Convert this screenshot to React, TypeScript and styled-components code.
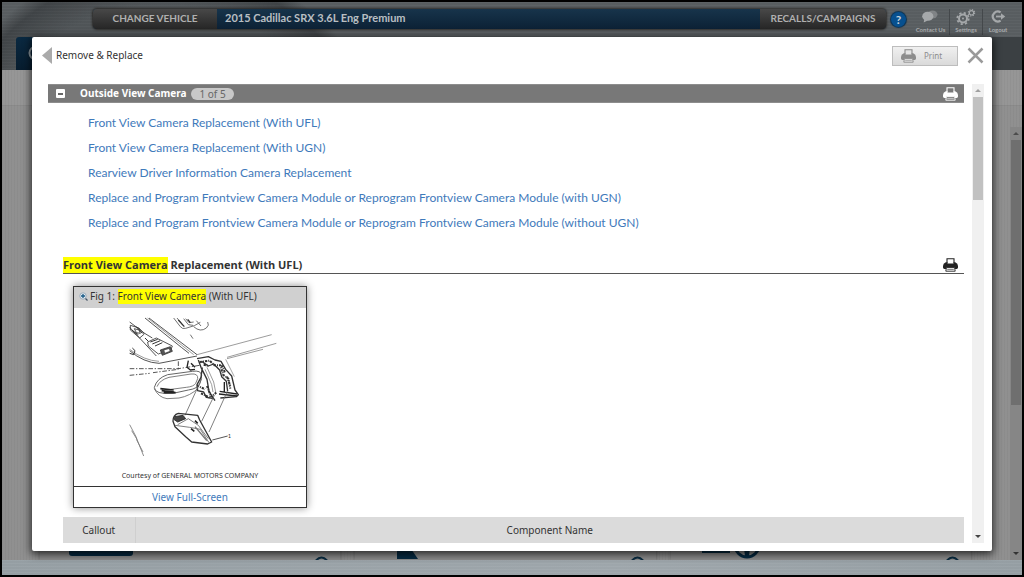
import React from "react";
import styled, { createGlobalStyle } from "styled-components";

const GlobalStyle = createGlobalStyle`
  *, *::before, *::after { box-sizing: border-box; }
  body { margin: 0; background: #000; font-family: Lato, "Noto Sans", sans-serif; color: #333; }
  button { font: inherit; color: inherit; border: 0; padding: 0; background: none; cursor: pointer; }
  svg { display: block; flex: none; }
  h1, h2, h3, ul, figure { margin: 0; padding: 0; }
`;

const brushed = `repeating-linear-gradient(180deg, rgba(255,255,255,.02) 0 1px, rgba(0,0,0,.02) 1px 3px)`;

/* ---------- page behind the dialog ---------- */

const Page = styled.div`
  position: relative;
  display: flex;
  flex-direction: column;
  min-height: 100vh;
  border: 2px solid #000;
  background: #929292;
`;

const TopArea = styled.div`
  background: ${brushed}, radial-gradient(circle 240px at 160px 190px, #515659 0 78%, #404447 92%, #5a5f62 98%);
`;

const TopBar = styled.header`
  display: flex;
  align-items: flex-start;
  height: 35px;
  padding: 7px 9px 0 91px;
`;

const VehicleBar = styled.div`
  flex: 1;
  display: flex;
  height: 20px;
  border-radius: 4px;
  overflow: hidden;
  box-shadow: 0 0 2px 1px rgba(30, 25, 22, 0.7);
  background: linear-gradient(#17344b, #0c2135);
  color: #b9bfc3;
`;

const BarButton = styled.button<{ $width: number }>`
  width: ${(p) => p.$width}px;
  background: linear-gradient(#484848, #262626);
  color: #b0b0b0;
  font-size: 10px;
  font-weight: 700;
  line-height: 18px;
  padding-bottom: 2px;
`;

const Vehicle = styled.div`
  flex: 1;
  padding-left: 8px;
  font-size: 11px;
  font-weight: 700;
  line-height: 18px;
`;

const HelpButton = styled.button`
  width: 15px;
  height: 15px;
  margin: 3px 5px 0;
  border-radius: 50%;
  background: #07508f;
  box-shadow: 0 0 1px 1px #0a3152;
  color: #c8d2da;
  font-size: 12px;
  font-weight: 700;
  line-height: 15px;
`;

const Utility = styled.button<{ $width: number; $divided?: boolean }>`
  display: flex;
  flex-direction: column;
  align-items: center;
  width: ${(p) => p.$width}px;
  height: 26px;
  border-left: 1px solid ${(p) => (p.$divided ? "#44484b" : "transparent")};
  color: #a5a8aa;
  font-size: 6px;
  font-weight: 900;
  line-height: 8px;
  white-space: nowrap;
`;

const NavStrip = styled.nav`
  display: flex;
  height: 33px;
  padding-left: 14px;
  background: linear-gradient(90deg, transparent 50%, #3b4043 50%);
`;

const NavTab = styled.div`
  width: 120px;
  padding: 8px 0 0 12px;
  border-radius: 3px 0 0 0;
  background: linear-gradient(#0a2941, #071c2e);
`;

const Body = styled.main`
  flex: 1;
  display: flex;
  background:
    repeating-linear-gradient(90deg, rgba(0,0,0,.03) 0 1px, transparent 1px 3px),
    linear-gradient(#969696 35px, #848484 35px, #909090 36px);
`;

const Tiles = styled.div`
  flex: 1;
  display: grid;
  grid-template-columns: repeat(3, 1fr);
  align-items: end;
  gap: 15px;
  padding: 0 39px 0 38px;
`;

const Tile = styled.section`
  display: flex;
  align-items: flex-end;
  justify-content: space-between;
  height: 60px;
  padding: 0 12px 0 29px;
  background: #8d8d8d;
  box-shadow: 0 0 3px #6e6e6e;
`;

const PageScroll = styled.div`
  display: flex;
  flex-direction: column;
  align-items: center;
  width: 12px;
  margin-top: 57px;
  background: #868686;
`;

const PageThumb = styled.div`
  width: 10px;
  height: 265px;
  background: #6f6f6f;
`;

const Footer = styled.footer`
  height: 15px;
  background: ${brushed}, linear-gradient(90deg, #98a1a6, #a1a9ae 60%, #98a1a6);
`;

/* ---------- dialog ---------- */

const Dialog = styled.section`
  position: absolute;
  top: 35px;
  left: 30px;
  right: 30px;
  padding-bottom: 8px;
  border-radius: 2px;
  background: #fff;
  box-shadow: 0 2px 8px 1px rgba(0, 0, 0, 0.75);
`;

const DialogHead = styled.header`
  display: flex;
  align-items: center;
  height: 47px;
  padding: 0 8px 10px 10px;
`;

const Back = styled.button`
  display: flex;
  align-items: center;
  gap: 4px;
  margin-right: auto;
  font-family: "Noto Sans", sans-serif;
  font-size: 10px;
  line-height: 17px;
`;

const PrintButton = styled.button`
  display: flex;
  align-items: center;
  gap: 8px;
  width: 66px;
  height: 20px;
  margin-right: 9px;
  padding-left: 8px;
  border: 1px solid #bdbdbd;
  background: linear-gradient(#f0f0f0, #dadada);
  color: #8c8c8c;
  font-family: "Noto Sans", sans-serif;
  font-size: 8px;
`;

const Pane = styled.div`
  display: flex;
  gap: 8px;
  padding: 0 8px 0 16px;
`;

const Content = styled.div`
  flex: 1;
  min-width: 0;
`;

const SectionBar = styled.div`
  display: flex;
  align-items: center;
  height: 19px;
  padding: 0 6px 0 8px;
  border: 1px solid #8d8d8d;
  border-width: 1px 0;
  background: #787878;
  color: #fff;
  font-family: "Noto Sans", sans-serif;
  font-size: 10px;
`;

const Collapse = styled.button`
  width: 9px;
  height: 9px;
  padding: 0 2px;
  margin-right: 15px;
  border-radius: 1px;
  background: #fff;
  &::before { content: ""; display: block; height: 2px; background: #666; }
`;

const SectionTitle = styled.h2`
  font-size: 10px;
  font-weight: 700;
  line-height: 17px;
`;

const Count = styled.span`
  margin: 0 auto 0 5px;
  padding: 0 8px;
  border-radius: 6px;
  background: #c8c8c8;
  color: #666;
  line-height: 12px;
`;

const Links = styled.ul`
  list-style: none;
  padding: 7px 0 0 40px;
  font-size: 12px;
  line-height: 25px;
`;

const Link = styled.a`
  color: #3f7abb;
  text-decoration: none;
`;

const Article = styled.article`
  padding: 21px 0 0 15px;
`;

const ArticleHead = styled.header`
  display: flex;
  align-items: center;
  justify-content: space-between;
  height: 18px;
  padding-right: 6px;
  border-bottom: 1px solid #555;
`;

const ArticleTitle = styled.h3`
  font-family: "Open Sans", sans-serif;
  font-size: 11px;
  font-weight: 700;
  line-height: 16px;
`;

const Mark = styled.mark`
  display: inline-block;
  background: #ff0;
  color: inherit;
`;

const Figure = styled.figure`
  width: 234px;
  margin: 12px 0 9px 10px;
  border: 1px solid #333;
  box-shadow: 0 0 8px rgba(0, 0, 0, 0.45);
  font-family: "Noto Sans", sans-serif;
  font-size: 10px;
  text-align: center;
`;

const FigCaption = styled.figcaption`
  display: flex;
  align-items: center;
  gap: 2px;
  height: 21px;
  padding: 0 5px 2px;
  background: #d0d0d0;
  line-height: 15px;
`;

const Drawing = styled.div`
  display: flex;
  justify-content: center;
  padding-top: 2px;
`;

const Courtesy = styled.p`
  margin: 0;
  padding: 10px 0 5px;
  font-size: 7px;
  line-height: 11px;
`;

const FullScreen = styled.div`
  border-top: 1px solid #333;
  line-height: 20px;
`;

const Table = styled.table`
  width: 100%;
  border-collapse: collapse;
  table-layout: fixed;
  background: #dbdbdb;
  font-family: "Noto Sans", sans-serif;
  font-size: 10px;
  line-height: 26px;
`;

const Th = styled.th<{ $width?: number }>`
  width: ${(p) => (p.$width ? p.$width + "px" : "auto")};
  padding: 0;
  font-weight: 400;
  & + & { border-left: 1px solid #cfcfcf; }
`;

const Scroll = styled.div`
  display: flex;
  flex-direction: column;
  align-items: center;
  width: 12px;
  background: #f0f0f0;
`;

const Thumb = styled.div`
  width: 10px;
  height: 103px;
  background: #c1c1c1;
`;

const Arrow = styled.button<{ $down?: boolean; $tone: string }>`
  width: 12px;
  height: 13px;
  margin-top: ${(p) => (p.$down ? "auto" : "0")};
  &::before {
    content: "";
    display: block;
    width: 0;
    margin: 0 auto;
    border: 3px solid transparent;
    border-top: ${(p) => (p.$down ? `3px solid ${p.$tone}` : "0")};
    border-bottom: ${(p) => (p.$down ? "0" : `3px solid ${p.$tone}`)};
  }
`;

/* ---------- drawings ---------- */

const Printer = ({ body, paper, edge }: { body: string; paper: string; edge: string }) => (
  <svg width="15" height="14" viewBox="0 0 15 14" aria-hidden="true">
    <path d="M4 5V.8h7V5" fill={paper} stroke={edge} strokeWidth="1.1" />
    <path d="M2.800 4.200h1.700v1.400h6V4.200h1.700Q15 5.500 15 8v1.600q0 1.400-1.400 1.400H1.400Q0 11 0 9.600V8Q0 5.500 2.800 4.200z" fill={body} />
    <path d="M3.400 9.600h8.200l.6 3.600H2.800z" fill={paper} stroke={edge} strokeWidth=".9" />
    <path d="M4.200 11.400h6.600" stroke={body} strokeWidth=".6" />
  </svg>
);

const Gears = () => (
  <svg width="20" height="17" viewBox="0 0 20 17" fill="none" stroke="currentColor" aria-hidden="true">
    <circle cx="7" cy="9.500" r="4" strokeWidth="2" />
    <circle cx="7" cy="9.500" r="5.700" strokeWidth="1.800" strokeDasharray="2.200 2.280" />
    <circle cx="7" cy="9.500" r="1" fill="currentColor" stroke="none" />
    <circle cx="15.500" cy="3.800" r="2.200" strokeWidth="1.200" />
    <circle cx="15.500" cy="3.800" r="3.200" strokeWidth="1.100" strokeDasharray="1.250 1.260" />
  </svg>
);

const Bubbles = () => (
  <svg width="18" height="17" viewBox="0 0 18 17" fill="currentColor" aria-hidden="true">
    <ellipse cx="10.500" cy="5.500" rx="5" ry="4" opacity=".5" />
    <ellipse cx="5.800" cy="7.300" rx="5.600" ry="4.500" />
    <path d="M2.300 10l-.6 3.600 4-2.200z" />
  </svg>
);

const Exit = () => (
  <svg width="16" height="17" viewBox="0 0 16 17" fill="none" stroke="currentColor" strokeWidth="2.200" aria-hidden="true">
    <path d="M10.600 3.300A5 5 0 1 0 10.600 11.700" />
    <path d="M6 7.500h6" strokeWidth="1.800" />
    <path d="M11 4.300L15.200 7.500 11 10.700z" fill="currentColor" stroke="none" />
  </svg>
);

const Badge = () => (
  <svg width="13" height="4" viewBox="0 0 13 4" fill="none" aria-hidden="true">
    <path d="M1 4.500Q6.500-1.500 12 4.500" stroke="#0a2c42" strokeWidth="2" />
  </svg>
);

const Camera = () => (
  <svg width="190" height="150" viewBox="-74 0 570 450" fill="none" stroke="#333" strokeWidth="2.500" strokeLinejoin="round" role="img" aria-label="Front view camera assembly">
    {/* roof console */}
    <path d="M30 52L110 138M30 36L75 70 98 84M88 24L232 134M76 24L185 112M30 122Q72 158 118 160L232 138M185 112L208 130" />
    <path d="M84 24L222 134M30 118Q74 152 118 154" stroke="#888" />
    <path d="M32 46l26 8 16 18-14 12-28-24zM44 56l14 4 4 10-12-2zM84 96l26-12 48 24-4 10-38 14-30-24z" />
    <path d="M122 120l30-10 6 14-30 12z" fill="#555" />
    <path d="M134 121l14-4 2 6-14 5z" fill="#fff" stroke="none" />
    <path d="M92 96l22-8M98 102l24-10M106 108l22-10M76 84l10 10M30 130l12 4 4-12-8-8M36 60l20 14M50 50l18 20" strokeWidth="3" />
    {/* visor mount */}
    <path d="M162 24l20 26q6 8 16 5l26-8 18-10M172 24l18 22M192 26l14 18 14 2M198 26l10 12 14-2M222 50q20 18 38 4 10-8 4-18M230 32l14 16M212 74l8 12" stroke="#555" />
    <path d="M176 30l18 20M204 28l8 10" stroke="#333" strokeWidth="4" />
    {/* headliner edges */}
    <path d="M232 134L456 74M322 142L470 100M322 146L430 118" stroke="#888" />
    <path d="M30 176H176L240 166M30 196l60-6M100 188l76-10M176 154v26" strokeDasharray="14 5 4 5" />
    <path d="M318 148l26 52" stroke="#999" />
    {/* mirror */}
    <path d="M104 232Q112 204 144 194L218 184Q244 180 246 196L242 218Q236 236 206 240L160 250Q104 254 104 232z" strokeWidth="3" stroke="#666" />
    <path d="M112 230Q120 210 148 202L214 192Q236 190 234 206L228 220Q222 230 200 232L154 238M104 236q12 26 38 30l36-2q34-6 58-30" stroke="#666" />
    <path d="M122 236l40 4M126 242l38 4M132 248l36 0" stroke="#222" strokeWidth="5" />
    <path d="M206 152l-4 20 10 8 14-2M214 160l12 12" stroke="#222" strokeWidth="4" />
    {/* bracket */}
    <path d="M232 146l34-6 20 10 18 4 14 24 18 20 10 42 10 14-6 6-48 4M236 150l8 22 18 36 6 36 18 28M246 154l20 14 16-6 18 18 6 20 14 14 4 30M248 172l-4 30-12 22 2 18 18 4 8 16 22 4" stroke="#333" strokeWidth="4" />
    <path d="M240 156l30-4 14 14 18 0 8 28 16 12 6 30M252 164l16 4M306 166l10 22M322 200l10 28M232 226l24 12M244 250l28 14M262 228l12 32 16-12" stroke="#333" strokeWidth="6" strokeDasharray="7 3 3 3" />
    <path d="M300 244l52 8M298 252l54 6M314 216v30" stroke="#222" strokeWidth="4" />
    <path d="M262 172l20 44 6 30M256 178l20 46 4 22" stroke="#888" />
    {/* explode lines */}
    <path d="M246 206L196 316M284 256L246 334M322 246L268 366" stroke="#666" />
    {/* camera module */}
    <path d="M160 334Q160 314 176 310L234 316 240 330 276 396 264 402 216 396 198 380 166 350z" stroke="#333" strokeWidth="4" />
    <path d="M164 320l26-4 8 10-24 10-12-8" fill="#444" stroke="#222" />
    <path d="M174 344L206 326 236 346 266 386M210 352L242 358 268 398M166 346L210 352" stroke="#666" />
    <path d="M226 332l8 8M214 356l10 8" stroke="#222" strokeWidth="5" />
    <path d="M236 362l26 30M226 350l34 40" stroke="#777" strokeWidth="4" />
    <path d="M278 390L324 378" />
    {/* windscreen edge */}
    <path d="M30 344L48 378 72 438M36 362l16 26M50 388l20 38" stroke="#777" />
    <text x="325" y="384" fill="#222" stroke="none" fontSize="15" fontFamily="Lato, sans-serif">1</text>
  </svg>
);

const topics = [
  "Front View Camera Replacement (With UFL)",
  "Front View Camera Replacement (With UGN)",
  "Rearview Driver Information Camera Replacement",
  "Replace and Program Frontview Camera Module or Reprogram Frontview Camera Module (with UGN)",
  "Replace and Program Frontview Camera Module or Reprogram Frontview Camera Module (without UGN)",
];

export default function App() {
  return (
    <Page>
      <GlobalStyle />
      <TopArea>
        <TopBar>
          <VehicleBar>
            <BarButton $width={124}>CHANGE VEHICLE</BarButton>
            <Vehicle>2015 Cadillac SRX 3.6L Eng Premium</Vehicle>
            <BarButton $width={126}>RECALLS/CAMPAIGNS</BarButton>
          </VehicleBar>
          <HelpButton aria-label="Help">?</HelpButton>
          <Utility $width={38}><Bubbles />Contact Us</Utility>
          <Utility $width={33} $divided><Gears />Settings</Utility>
          <Utility $width={31} $divided><Exit />Logout</Utility>
        </TopBar>
        <NavStrip>
          <NavTab>
            <svg width="16" height="16" viewBox="0 0 16 16" fill="none" stroke="#8d989f" strokeWidth="2" aria-hidden="true">
              <circle cx="8" cy="8" r="6.500" />
            </svg>
          </NavTab>
        </NavStrip>
      </TopArea>
      <Body>
        <Tiles>
          <Tile>
            <svg width="64" height="20" viewBox="0 0 64 20" aria-hidden="true">
              <rect width="64" height="16" rx="3" fill="#062a42" />
            </svg>
            <Badge />
          </Tile>
          <Tile>
            <svg width="34" height="20" viewBox="0 0 34 20" aria-hidden="true">
              <path d="M13 0h8l13 19H13z" fill="#062a42" />
            </svg>
            <Badge />
          </Tile>
          <Tile>
            <svg width="62" height="30" viewBox="0 0 62 30" aria-hidden="true">
              <path d="M2 22h28" stroke="#062a42" strokeWidth="2" />
              <circle cx="47" cy="15" r="12" fill="none" stroke="#062a42" strokeWidth="3" />
              <path d="M44 18h6l-1 8h-4z" fill="#062a42" />
            </svg>
            <Badge />
          </Tile>
        </Tiles>
        <PageScroll>
          <Arrow $tone="#4c4c4c" aria-label="Scroll page up" />
          <PageThumb />
          <Arrow $down $tone="#333" aria-label="Scroll page down" />
        </PageScroll>
      </Body>
      <Footer />

      <Dialog role="dialog" aria-label="Remove & Replace">
        <DialogHead>
          <Back>
            <svg width="10" height="17" viewBox="0 0 10 17" aria-hidden="true">
              <path d="M10 0v17L0 8.500z" fill="#aaa" />
            </svg>
            Remove &amp; Replace
          </Back>
          <PrintButton>
            <Printer body="#8c8c8c" paper="#e4e4e4" edge="#8c8c8c" />
            Print
          </PrintButton>
          <button aria-label="Close">
            <svg width="17" height="17" viewBox="0 0 17 17" aria-hidden="true">
              <path d="M1.500 1.500l14 14M15.500 1.500l-14 14" stroke="#9a9a9a" strokeWidth="2.500" />
            </svg>
          </button>
        </DialogHead>
        <Pane>
          <Content>
            <SectionBar>
              <Collapse aria-label="Collapse section" />
              <SectionTitle>Outside View Camera</SectionTitle>
              <Count>1 of 5</Count>
              <button aria-label="Print section"><Printer body="#fff" paper="#787878" edge="#fff" /></button>
            </SectionBar>
            <Links>
              {topics.map((t) => (
                <li key={t}><Link href="#topic">{t}</Link></li>
              ))}
            </Links>
            <Article>
              <ArticleHead>
                <ArticleTitle><Mark>Front View Camera</Mark> Replacement (With UFL)</ArticleTitle>
                <button aria-label="Print article"><Printer body="#222" paper="#fff" edge="#222" /></button>
              </ArticleHead>
              <Figure>
                <FigCaption>
                  <svg width="9" height="9" viewBox="0 0 9 9" fill="none" aria-hidden="true">
                    <circle cx="4" cy="4" r="3.200" stroke="#9ab" fill="#e8eef2" />
                    <path d="M4 2v4M2 4h4" stroke="#1a5a86" strokeWidth="1.300" />
                    <path d="M6.500 6.500l2 2" stroke="#456" strokeWidth="1.200" />
                  </svg>
                  <span>Fig 1: <Mark>Front View Camera</Mark> (With UFL)</span>
                </FigCaption>
                <Drawing><Camera /></Drawing>
                <Courtesy>Courtesy of GENERAL MOTORS COMPANY</Courtesy>
                <FullScreen><Link href="#figure">View Full-Screen</Link></FullScreen>
              </Figure>
              <Table>
                <thead>
                  <tr>
                    <Th scope="col" $width={72}>Callout</Th>
                    <Th scope="col">Component Name</Th>
                  </tr>
                </thead>
              </Table>
            </Article>
          </Content>
          <Scroll>
            <Arrow $tone="#a0a0a0" aria-label="Scroll up" />
            <Thumb />
            <Arrow $down $tone="#444" aria-label="Scroll down" />
          </Scroll>
        </Pane>
      </Dialog>
    </Page>
  );
}
